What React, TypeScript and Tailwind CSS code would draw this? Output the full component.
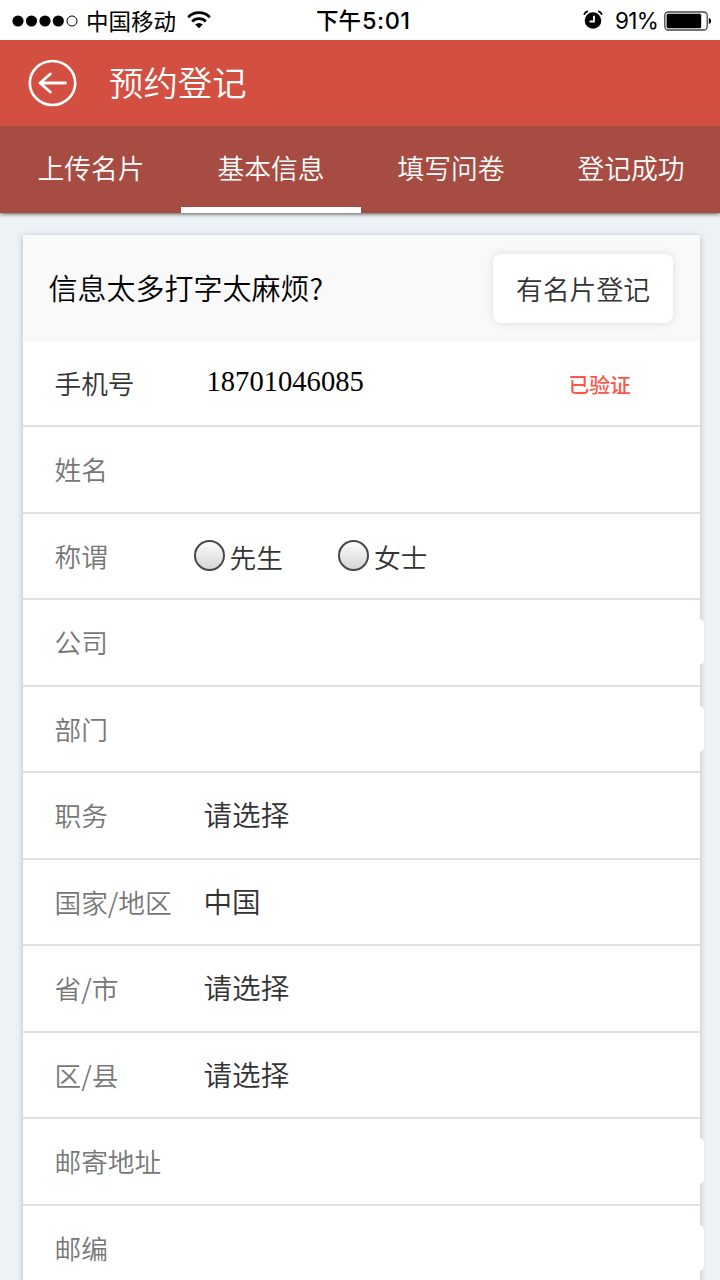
import { useState } from "react";

type Field = {
    label: string;
    kind: "phone" | "text" | "wide" | "radio" | "select";
    value?: string;
};

const tabs = ["上传名片", "基本信息", "填写问卷", "登记成功"];

const fields: Field[] = [
    { label: "手机号", kind: "phone", value: "18701046085" },
    { label: "姓名", kind: "text" },
    { label: "称谓", kind: "radio" },
    { label: "公司", kind: "wide" },
    { label: "部门", kind: "wide" },
    { label: "职务", kind: "select", value: "请选择" },
    { label: "国家/地区", kind: "select", value: "中国" },
    { label: "省/市", kind: "select", value: "请选择" },
    { label: "区/县", kind: "select", value: "请选择" },
    { label: "邮寄地址", kind: "wide" },
    { label: "邮编", kind: "wide" },
];

function StatusBar() {
    return (
        <div className="h-10 shrink-0 bg-white text-black flex items-center justify-between pl-3 pr-2">
            <div className="flex items-center w-[304px]">
                <svg width="66" height="14" viewBox="0 0 66 14" className="mt-0.5">
                    <circle cx="6" cy="7" r="5.6" />
                    <circle cx="19.5" cy="7" r="5.6" />
                    <circle cx="33" cy="7" r="5.6" />
                    <circle cx="46.3" cy="7" r="5.6" />
                    <circle cx="60" cy="7" r="5" fill="none" stroke="#000" />
                </svg>
                <span className="ml-2 -mt-px text-[22.5px] leading-10">中国移动</span>
                <svg width="24" height="18" viewBox="0 0 24 18" className="ml-[11px]" fill="none" stroke="#000" strokeWidth="2.8">
                    <path d="M1.2 6.2a15.2 15.2 0 0 1 21.6 0" />
                    <path d="M5.2 10.4a9.6 9.6 0 0 1 13.6 0" />
                    <path d="M12 17.2l-3.8-3.6q3.8-3 7.6 0z" fill="#000" stroke="none" />
                </svg>
            </div>
            <span className="flex-1 font-medium text-[22.5px] leading-10 whitespace-nowrap">
                下午
                <span className="ml-px text-[23.5px] tracking-[0.5px] font-['Inter',sans-serif]">5:01</span>
            </span>
            <div className="flex items-center">
                <svg width="20" height="20" viewBox="0 0 20 20" fill="none">
                    <circle cx="10" cy="10.5" r="8.3" fill="#000" />
                    <path d="M1 4.8Q2 2.2 4.8 1.2M19 4.8Q18 2.2 15.2 1.2" stroke="#000" strokeWidth="1.8" />
                    <path d="M11 5.8v5.7H6.6" stroke="#fff" strokeWidth="1.8" />
                </svg>
                <span className="ml-3 mt-0.5 w-[43px] whitespace-nowrap text-[22.5px] tracking-[-0.7px] leading-10 font-['Inter',sans-serif]">91%</span>
                <svg width="48" height="20" viewBox="0 0 48 20" className="ml-1.5 mt-0.5">
                    <rect x="0.8" y="1" width="42.4" height="18" rx="3.5" fill="none" stroke="#444" strokeWidth="1.3" />
                    <rect x="2.6" y="2.8" width="34.6" height="14.4" rx="1.5" />
                    <path d="M44.8 7q2.4.6 2.4 3t-2.4 3z" />
                </svg>
            </div>
        </div>
    );
}

function Radio({ label, checked, onChange }: { label: string; checked: boolean; onChange: () => void }) {
    return (
        <label className="flex items-center w-[144.5px] text-[#333]">
            <input type="radio" name="title" className="sr-only" checked={checked} onChange={onChange} />
            <span className="w-[31px] h-[31px] rounded-full border-2 border-[#484848] bg-linear-to-b from-[#fcfcfc] to-[#d6d6d6] flex items-center justify-center">
                {checked && <span className="w-3 h-3 rounded-full bg-[#333]" />}
            </span>
            <span className="ml-[5px] mt-[3px] text-[26.7px] font-[350]">{label}</span>
        </label>
    );
}

export default function App() {
    const [active, setActive] = useState(1);
    const [title, setTitle] = useState("");

    return (
        <div className="w-[720px] h-[1280px] overflow-hidden flex flex-col bg-[#edf2f6] font-['Noto_Sans_CJK_SC',sans-serif]">
            <StatusBar />

            {/* Header */}
            <header className="relative z-10 h-[86px] shrink-0 bg-[#d24f41] text-white flex items-center pl-7">
                <svg width="49" height="48" viewBox="0 0 49 48" fill="none" stroke="#fff" strokeWidth="2.6" strokeLinecap="round" strokeLinejoin="round">
                    <ellipse cx="24.5" cy="24" rx="22.7" ry="22" />
                    <path d="M37.5 24H12.5M22.3 15L12 24l10.3 9" strokeWidth="2.8" />
                </svg>
                <h1 className="ml-8 -mt-[5px] text-[34.4px] leading-[86px] font-[350]">预约登记</h1>
            </header>

            {/* Steps */}
            <nav className="relative h-[87px] shrink-0 bg-[#a74c42] text-white grid grid-cols-4 shadow-[0_1px_4px_rgba(0,0,0,0.65)]">
                {tabs.map((tab, i) => (
                    <button
                        key={tab}
                        onClick={() => setActive(i)}
                        className={`ml-px -mr-px h-[87px] text-[26.8px] leading-[84px] font-[350] ${i === active ? "border-b-[6px] border-white" : "border-b-[6px] border-transparent"}`}
                    >
                        {tab}
                    </button>
                ))}
            </nav>

            {/* Form card */}
            <main className="mt-[22px] ml-[22.5px] w-[677.5px] shrink-0 bg-white shadow-[0_1px_6px_rgba(0,0,0,0.24)]">
                <div className="h-[105.5px] bg-[#f9f9f9] flex items-center justify-between pl-[26px] pr-[27px]">
                    <p className="text-[29px] text-black font-[350]">信息太多打字太麻烦?</p>
                    <button className="w-[180px] h-[69px] mt-0.5 bg-white rounded-lg shadow-[0_0_8px_rgba(0,0,0,0.12)] text-[26.8px] text-[#333] font-[350]">
                        有名片登记
                    </button>
                </div>

                {fields.map((field) => (
                    <div key={field.label} className="h-[86.5px] flex items-center border-b-2 border-[#e0e1e1] pl-8">
                        <span className={`w-[149px] shrink-0 text-[26.7px] font-[350] ${field.kind === "phone" ? "text-[#333]" : "text-[#777]"}`}>
                            {field.label}
                        </span>

                        {field.kind === "phone" && (
                            <>
                                <span className="ml-[3px] w-[362px] text-[28.6px] text-black font-['Liberation_Serif',serif]">{field.value}</span>
                                <span className="mt-[3px] text-[20.8px] font-medium text-[#ff5549]">已验证</span>
                            </>
                        )}

                        {field.kind === "text" && <input className="flex-1 h-[46px] outline-none" />}

                        {/* these inputs run slightly past the card's right edge */}
                        {field.kind === "wide" && (
                            <input className="relative flex-1 h-[46px] -mr-1 bg-white rounded-[5px] outline-none" />
                        )}

                        {field.kind === "radio" && (
                            <div className="flex -ml-[10px]">
                                <Radio label="先生" checked={title === "mr"} onChange={() => setTitle("mr")} />
                                <Radio label="女士" checked={title === "ms"} onChange={() => setTitle("ms")} />
                            </div>
                        )}

                        {field.kind === "select" && <span className="-mt-px text-[28.6px] text-[#333] font-[350]">{field.value}</span>}
                    </div>
                ))}
            </main>
        </div>
    );
}
